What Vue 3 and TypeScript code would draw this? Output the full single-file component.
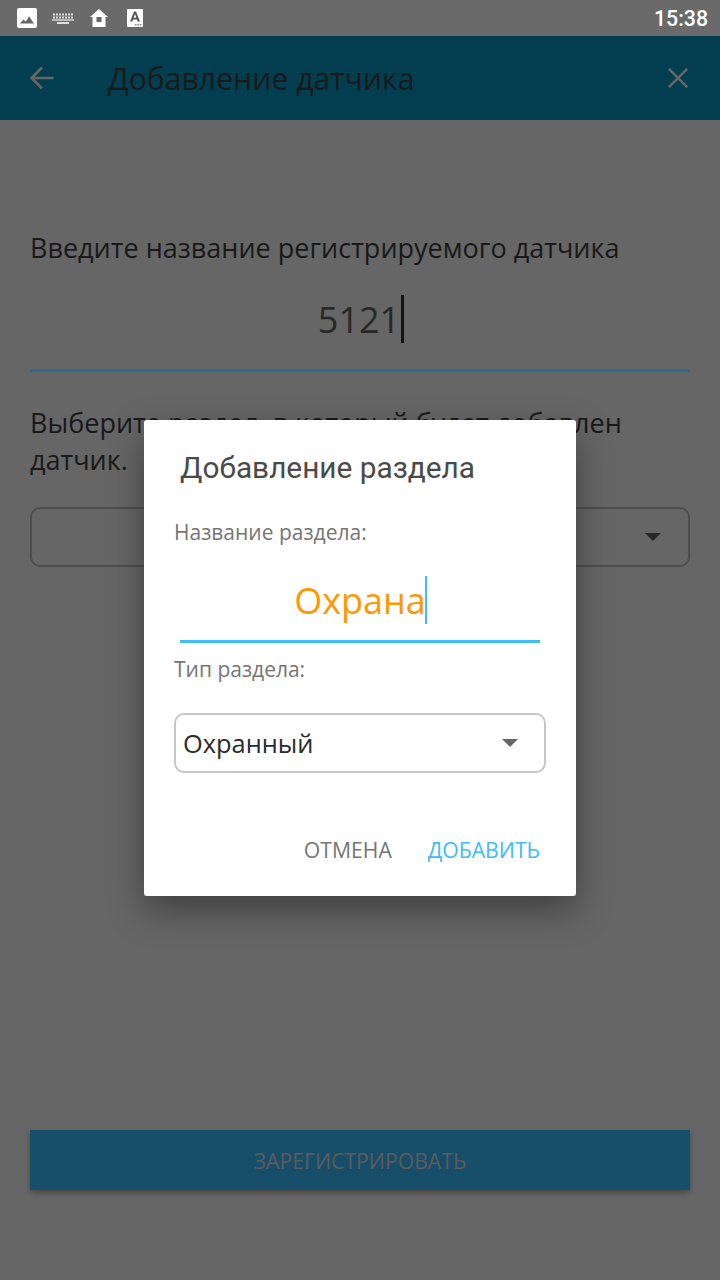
<script setup lang="ts">
const keyRows = [
  { y: 3.5, xs: [1, 4, 7, 10, 13, 16, 19] },
  { y: 6.5, xs: [1, 4, 7, 10, 13, 16, 19] },
]
</script>

<template>
  <div class="screen">
    <div class="status-bar">
      <div class="status-icons">
        <svg class="ic-gallery" viewBox="0 0 20 20">
          <rect x="0" y="0" width="20" height="20" rx="2" fill="#fff" />
          <path d="M3 15.5l3.5-4 2 2 1.5-1.5 2-4 2.5 4 2.5 3.500z" fill="#666" />
        </svg>
        <svg class="ic-keyboard" viewBox="0 0 22 12">
          <g v-for="row in keyRows" :key="row.y">
            <rect v-for="x in row.xs" :key="x" :x="x" :y="row.y - 2" width="2" height="2" fill="#ddd" />
          </g>
          <rect x="0" y="7" width="22" height="2" fill="#bbb" />
          <rect x="5" y="10" width="12" height="2" fill="#ddd" />
        </svg>
        <svg class="ic-home" viewBox="0 0 18 18">
          <path d="M9 0L18 8h-2.500v10h-13V8H0z" fill="#fff" />
          <rect x="6.500" y="8" width="5" height="5" fill="#666" />
        </svg>
        <svg class="ic-font" viewBox="0 0 16 18">
          <rect width="16" height="18" rx="1" fill="#fff" />
          <path d="M3 12.500L7 2.500h2l4 10h-2.300l-.7-2H6l-.7 2zM6.700 8.700h2.600L8 4.800z" fill="#555" />
          <path d="M8 15h1.500v1.500H8zm2.500 0H12v1.500h-1.500zm2.500 0h1.500v1.500H13z" fill="#888" />
        </svg>
      </div>
      <span class="clock">15:38</span>
    </div>

    <header class="toolbar">
      <svg class="ic-back" viewBox="0 0 24 24">
        <path d="M23.500 12H2M12 1.500L1.500 12 12 22.500" fill="none" stroke="#666" stroke-width="2.600" />
      </svg>
      <h1 class="toolbar-title">Добавление датчика</h1>
      <svg class="ic-close" viewBox="0 0 20 20">
        <path d="M.8.800l18.400 18.400M19.200.800L.8 19.200" fill="none" stroke="#666" stroke-width="2.600" />
      </svg>
    </header>

    <main class="content">
      <p class="label">Введите название регистрируемого датчика</p>
      <div class="name-field">
        <span class="name-value">5121</span><span class="name-caret"></span>
      </div>
      <p class="label label-section">Выберите раздел, в который будет добавлен датчик.</p>
      <div class="section-select">
        <span class="arrow arrow-dim"></span>
      </div>
      <button class="register" type="button">ЗАРЕГИСТРИРОВАТЬ</button>
    </main>

    <section class="dialog">
      <h2 class="dialog-title">Добавление раздела</h2>
      <p class="dialog-label">Название раздела:</p>
      <div class="dialog-input">
        <span class="dialog-value">Охрана</span><span class="dialog-caret"></span>
      </div>
      <p class="dialog-label dialog-label-type">Тип раздела:</p>
      <div class="type-select">
        <span>Охранный</span>
        <span class="arrow"></span>
      </div>
      <div class="dialog-actions">
        <button class="action" type="button">ОТМЕНА</button>
        <button class="action action-primary" type="button">ДОБАВИТЬ</button>
      </div>
    </section>
  </div>
</template>

<style scoped>
.screen {
  position: relative;
  width: 720px;
  height: 1280px;
  overflow: hidden;
  background: #666666;
  font-family: "Open Sans", "Noto Sans", sans-serif;
}

.status-bar {
  display: flex;
  align-items: center;
  justify-content: space-between;
  height: 36px;
  padding: 0 12px 0 17px;
  box-sizing: border-box;
  background: #6a6a6a;
}

.status-icons {
  display: flex;
  align-items: center;
}

.ic-gallery {
  width: 20px;
  height: 20px;
  margin-right: 15px;
}

.ic-keyboard {
  width: 22px;
  height: 12px;
  margin-right: 16px;
}

.ic-home {
  width: 18px;
  height: 18px;
  margin-right: 19px;
}

.ic-font {
  width: 16px;
  height: 18px;
}

.clock {
  color: #fff;
  font-family: Roboto, sans-serif;
  font-size: 21.3px;
  font-weight: 500;
}

.toolbar {
  display: flex;
  align-items: center;
  height: 84px;
  padding: 0 32px 0 30px;
  box-sizing: border-box;
  background: #023e4f;
}

.ic-back {
  width: 24px;
  height: 24px;
  flex: none;
}

.ic-close {
  width: 20px;
  height: 20px;
  flex: none;
  margin-left: auto;
}

.toolbar-title {
  margin: 0 0 0 54px;
  color: #1a1a1a;
  font-family: "Open Sans", sans-serif;
  font-size: 30.2px;
  font-weight: 400;
}

.content {
  display: flex;
  flex-direction: column;
  height: 1160px;
  padding: 0 30px;
  box-sizing: border-box;
}

.label {
  margin: 109px 0 0;
  color: #191919;
  font-size: 27px;
  line-height: 37px;
}

.label-section {
  margin-top: 32px;
}

.name-field {
  display: flex;
  align-items: center;
  justify-content: center;
  height: 90px;
  margin-top: 8px;
  padding: 0 0 5px 2px;
  border-bottom: 3px solid #2a6b8a;
  box-sizing: content-box;
  color: #282828;
  font-size: 36px;
}

.name-caret {
  width: 3px;
  height: 48px;
  margin-left: 1px;
  background: #141414;
}

.section-select {
  display: flex;
  align-items: center;
  justify-content: flex-end;
  height: 60px;
  margin-top: 29px;
  padding-right: 27px;
  border: 2px solid #4e4e4e;
  border-radius: 10px;
  box-sizing: border-box;
}

.arrow {
  width: 0;
  height: 0;
  border-left: 8px solid transparent;
  border-right: 8px solid transparent;
  border-top: 8px solid #666;
}

.arrow-dim {
  border-top-color: #282828;
}

.register {
  height: 60px;
  margin-top: 563px;
  padding: 0;
  border: 0;
  background: #174e69;
  box-shadow: 0 3px 5px rgba(0, 0, 0, 0.3);
  color: #5c5c5c;
  font-family: "Open Sans", sans-serif;
  font-size: 21.2px;
}

.dialog {
  position: absolute;
  left: 144px;
  top: 420px;
  width: 432px;
  height: 476px;
  padding: 0 30px;
  box-sizing: border-box;
  background: #fff;
  border-radius: 3px;
  box-shadow: 0 14px 36px rgba(0, 0, 0, 0.38);
}

.dialog-title {
  margin: 28px 0 0 6px;
  color: #4a4a4a;
  font-family: Roboto, sans-serif;
  font-size: 29.8px;
  font-weight: 400;
  line-height: 40px;
}

.dialog-label {
  margin: 29px 0 0;
  color: #757575;
  font-size: 21px;
  line-height: 30px;
}

.dialog-label-type {
  margin-top: 11px;
}

.dialog-input {
  display: flex;
  align-items: center;
  justify-content: center;
  height: 60px;
  margin: 23px 6px 0;
  padding: 0 0 10px 1px;
  border-bottom: 3px solid #40bcf8;
  box-sizing: content-box;
}

.dialog-value {
  color: #ff9800;
  font-size: 36px;
}

.dialog-caret {
  width: 2px;
  height: 48px;
  margin-left: -1px;
  background: #40bcf8;
}

.type-select {
  display: flex;
  align-items: center;
  justify-content: space-between;
  height: 60px;
  margin-top: 29px;
  padding: 0 26px 0 7px;
  border: 2px solid #c6c6c6;
  border-radius: 10px;
  box-sizing: border-box;
  color: #2b2b2b;
  font-size: 25.4px;
}

.dialog-actions {
  display: flex;
  justify-content: flex-end;
  gap: 36px;
  margin-top: 62px;
  padding-right: 6px;
}

.action {
  padding: 0;
  border: 0;
  background: none;
  color: #757575;
  font-family: "Open Sans", sans-serif;
  font-size: 21.2px;
  line-height: 30px;
}

.action-primary {
  color: #40bcf8;
}
</style>
